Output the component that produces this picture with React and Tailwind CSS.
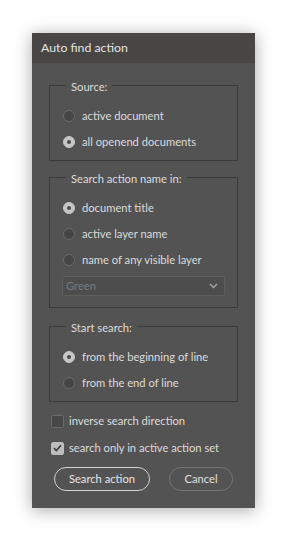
import React, { useState } from "react";

const font = { fontFamily: 'Lato, "Noto Sans", Arial, sans-serif' };

function Radio({ label, checked, onChange }) {
  return (
    <label className="flex items-center h-5 ml-px cursor-default whitespace-nowrap" onClick={onChange}>
      <span
        className={`w-3 h-3 shrink-0 rounded-full flex items-center justify-center border ${
          checked ? "bg-[#c6c6c6] border-[#c6c6c6]" : "bg-[#454545] border-[#6b6b6b]"
        }`}
      >
        {checked && <span className="w-[4px] h-[4px] rounded-full bg-[#4a4a4a]" />}
      </span>
      <span className="ml-[7px] text-[11.2px] text-[#dcdcdc]">{label}</span>
    </label>
  );
}

function Checkbox({ label, checked, onChange }) {
  return (
    <label className="flex items-center h-5 ml-[2px] cursor-default whitespace-nowrap" onClick={onChange}>
      <span
        className={`w-[13px] h-[13px] shrink-0 rounded-[2px] flex items-center justify-center border ${
          checked ? "bg-[#bdbdbd] border-[#bdbdbd]" : "bg-[#474747] border-[#6b6b6b]"
        }`}
      >
        {checked && (
          <svg width="9" height="8" viewBox="0 0 9 8">
            <path d="M1 4.2 L3.4 6.5 L8 1.3" fill="none" stroke="#3d3d3d" strokeWidth="1.6" />
          </svg>
        )}
      </span>
      <span className="ml-[5px] text-[11.2px] text-[#dcdcdc]">{label}</span>
    </label>
  );
}

function Group({ title, children, className = "" }) {
  return (
    <fieldset className={`border border-[#3b3b3b] px-3 pb-2 ${className}`}>
      <legend className="ml-[4px] px-[5px] text-[11.2px] leading-4 text-[#dcdcdc] translate-y-[2px]">{title}</legend>
      <div className="mt-[13px] flex flex-col gap-[6px]">{children}</div>
    </fieldset>
  );
}

export default function App() {
  const [source, setSource] = useState(1);
  const [where, setWhere] = useState(0);
  const [start, setStart] = useState(0);
  const [inverse, setInverse] = useState(false);
  const [onlyActive, setOnlyActive] = useState(true);

  return (
    <div className="min-h-[540px] bg-white pt-[33px] pl-[32px]" style={font}>
      <div className="w-[223px] bg-[#535353] shadow-[0_2px_16px_rgba(0,0,0,0.35)]">
        <div className="h-[30px] bg-[#474645] px-[9px] flex items-center text-[12.3px] text-[#e4e4e4]">
          Auto find action
        </div>

        <div className="px-[17px] pb-[17px]">
          <Group title="Source:" className="mt-[14px]">
            <Radio label="active document" checked={source === 0} onChange={() => setSource(0)} />
            <Radio label="all openend documents" checked={source === 1} onChange={() => setSource(1)} />
          </Group>

          <Group title="Search action name in:" className="mt-[8px] pb-[11px]">
            <Radio label="document title" checked={where === 0} onChange={() => setWhere(0)} />
            <Radio label="active layer name" checked={where === 1} onChange={() => setWhere(1)} />
            <Radio label="name of any visible layer" checked={where === 2} onChange={() => setWhere(2)} />
            <div className="h-[20px] border border-[#5e5e5e] bg-[#4d4d4d] rounded-[2px] flex items-center justify-between pl-[3px] pr-[6px]">
              <span className="text-[11.2px] text-[#7a7a7a]">Green</span>
              <svg width="9" height="6" viewBox="0 0 9 6">
                <path d="M1 1 L4.5 4.5 L8 1" fill="none" stroke="#a8a8a8" strokeWidth="1.3" />
              </svg>
            </div>
          </Group>

          <Group title="Start search:" className="mt-[10px]">
            <Radio label="from the beginning of line" checked={start === 0} onChange={() => setStart(0)} />
            <Radio label="from the end of line" checked={start === 1} onChange={() => setStart(1)} />
          </Group>

          <div className="mt-[9px] flex flex-col gap-[7px]">
            <Checkbox label="inverse search direction" checked={inverse} onChange={() => setInverse(!inverse)} />
            <Checkbox label="search only in active action set" checked={onlyActive} onChange={() => setOnlyActive(!onlyActive)} />
          </div>

          <div className="mt-[9px] flex justify-between px-[5px]">
            <button className="w-[96px] h-[24px] rounded-full border-[1.5px] border-[#d2d2d2] text-[11.2px] text-[#e6e6e6]">
              Search action
            </button>
            <button className="w-[64px] h-[24px] rounded-full border border-[#757575] text-[11.2px] text-[#e0e0e0]">
              Cancel
            </button>
          </div>
        </div>
      </div>
    </div>
  );
}
